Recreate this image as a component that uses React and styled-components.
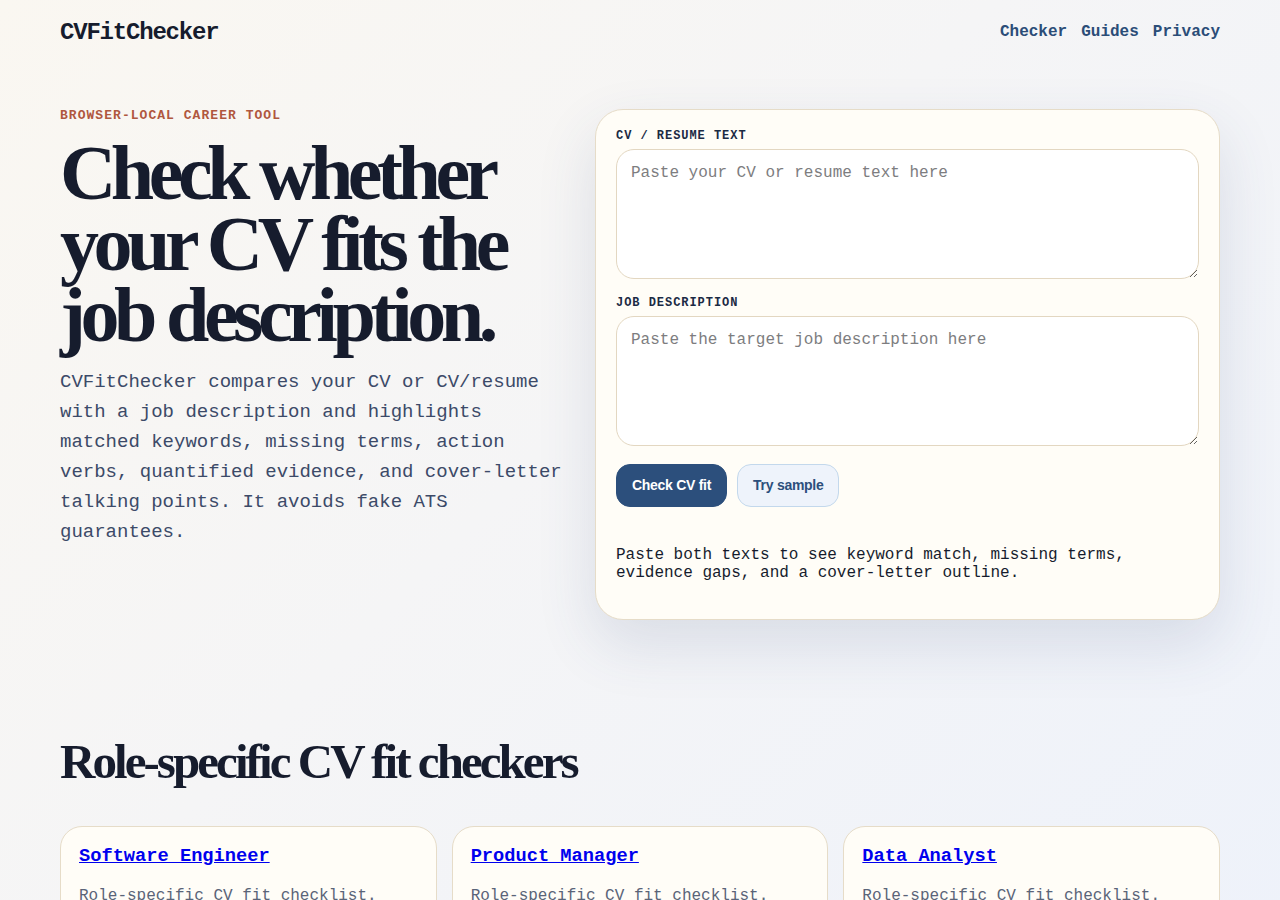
import styled, { createGlobalStyle } from "styled-components";

const GlobalStyle = createGlobalStyle`
  html, body {
    margin: 0;
    padding: 0;
  }
  body {
    min-height: 900px;
    background: linear-gradient(135deg, #faf7f1 0%, #f5f5f6 45%, #eef2fa 100%);
    color: #161c2d;
    font-family: "Liberation Mono", monospace;
  }
  * {
    box-sizing: border-box;
  }
`;

const Page = styled.div`
  width: 1160px;
  margin: 0 auto;
`;

const Header = styled.header`
  display: flex;
  align-items: center;
  justify-content: space-between;
  height: 62px;
  padding-top: 2px;
`;

const Logo = styled.div`
  font-family: "Liberation Mono", monospace;
  font-weight: 700;
  font-size: 24px;
  letter-spacing: -0.05em;
  color: #161c2d;
`;

const Nav = styled.nav`
  display: flex;
  gap: 14px;
`;

const NavLink = styled.a`
  font-family: "Liberation Mono", monospace;
  font-weight: 700;
  font-size: 16px;
  color: #2b4d78;
  text-decoration: none;
`;

const Hero = styled.section`
  display: grid;
  grid-template-columns: 505px 1fr;
  gap: 30px;
  align-items: start;
  padding-top: 46px;
`;

const Intro = styled.div`
  display: flex;
  flex-direction: column;
`;

const Eyebrow = styled.p`
  margin: 0;
  font-weight: 700;
  font-size: 13px;
  letter-spacing: 0.08em;
  color: #b0573e;
  line-height: 16px;
`;

const Title = styled.h1`
  margin: 13px 0 0;
  font-family: "Liberation Serif", serif;
  font-weight: 700;
  font-size: 78px;
  line-height: 71px;
  letter-spacing: -0.07em;
  color: #161c2d;
`;

const Lead = styled.p`
  margin: 17px 0 0;
  font-size: 19px;
  line-height: 30px;
  color: #3c4a68;
`;

const FormCard = styled.div`
  margin-top: 1px;
  background: #fffdf7;
  border: 1px solid #e6dcc8;
  border-radius: 28px;
  padding: 18px 20px 37px 20px;
  box-shadow: 0 24px 60px rgba(60, 80, 130, 0.14);
`;

const Label = styled.label`
  display: block;
  font-weight: 700;
  font-size: 12px;
  letter-spacing: 0.08em;
  line-height: 16px;
  color: #1b2a44;
  margin: ${(p) => (p.$first ? "0" : "16px")} 0 5px;
`;

const TextArea = styled.textarea`
  display: block;
  width: 100%;
  height: 130px;
  padding: 14px;
  border: 1px solid #e3d7c1;
  border-radius: 18px;
  background: #ffffff;
  font-family: "Liberation Mono", monospace;
  font-size: 16px;
  color: #161c2d;
  resize: vertical;
  outline: none;

  &::placeholder {
    color: #7d7d80;
  }
`;

const Actions = styled.div`
  display: flex;
  gap: 10px;
  margin-top: 18px;
`;

const Button = styled.button`
  font-family: "Liberation Sans", Arial, sans-serif;
  font-weight: 700;
  font-size: 14px;
  line-height: 17px;
  letter-spacing: -0.02em;
  padding: 12px 15px;
  border-radius: 14px;
  cursor: pointer;
  border: 1px solid ${(p) => (p.$primary ? "#2c4f7c" : "#c3d8ec")};
  background: ${(p) => (p.$primary ? "#2c4f7c" : "#eef3fb")};
  color: ${(p) => (p.$primary ? "#ffffff" : "#2c4f7c")};
`;

const Hint = styled.p`
  margin: 39px 0 0;
  font-size: 16px;
  line-height: 18px;
  color: #161c2d;
`;

const Roles = styled.section`
  padding-top: 112px;
`;

const SectionTitle = styled.h2`
  margin: 0;
  font-family: "Liberation Serif", serif;
  font-weight: 700;
  font-size: 49px;
  line-height: 60px;
  letter-spacing: -0.06em;
  color: #161c2d;
`;

const CardGrid = styled.div`
  display: grid;
  grid-template-columns: repeat(3, 1fr);
  gap: 15px;
  margin-top: 34px;
`;

const RoleCard = styled.div`
  background: #fffdf7;
  border: 1px solid #e6dcc8;
  border-radius: 22px;
  padding: 17px 18px 24px;
`;

const RoleLink = styled.a`
  font-weight: 700;
  font-size: 18.7px;
  line-height: 24px;
  color: #0000ee;
  text-decoration: underline;
`;

const RoleText = styled.p`
  margin: 16px 0 0;
  font-size: 16px;
  line-height: 24px;
  color: #5a6478;
`;

const roles = ["Software Engineer", "Product Manager", "Data Analyst"];

export default function App() {
  return (
    <>
      <GlobalStyle />
      <Page>
        <Header>
          <Logo>CVFitChecker</Logo>
          <Nav>
            <NavLink href="#checker">Checker</NavLink>
            <NavLink href="#guides">Guides</NavLink>
            <NavLink href="#privacy">Privacy</NavLink>
          </Nav>
        </Header>

        <Hero>
          <Intro>
            <Eyebrow>BROWSER-LOCAL CAREER TOOL</Eyebrow>
            <Title>Check whether your CV fits the job description.</Title>
            <Lead>
              CVFitChecker compares your CV or CV/resume with a job description and
              highlights matched keywords, missing terms, action verbs, quantified
              evidence, and cover-letter talking points. It avoids fake ATS
              guarantees.
            </Lead>
          </Intro>

          <FormCard>
            <Label $first htmlFor="cv">CV / RESUME TEXT</Label>
            <TextArea id="cv" placeholder="Paste your CV or resume text here" />
            <Label htmlFor="jd">JOB DESCRIPTION</Label>
            <TextArea id="jd" placeholder="Paste the target job description here" />
            <Actions>
              <Button $primary>Check CV fit</Button>
              <Button>Try sample</Button>
            </Actions>
            <Hint>
              Paste both texts to see keyword match, missing terms,
              <br />
              evidence gaps, and a cover-letter outline.
            </Hint>
          </FormCard>
        </Hero>

        <Roles>
          <SectionTitle>Role-specific CV fit checkers</SectionTitle>
          <CardGrid>
            {roles.map((role) => (
              <RoleCard key={role}>
                <RoleLink href="#">{role}</RoleLink>
                <RoleText>Role-specific CV fit checklist.</RoleText>
              </RoleCard>
            ))}
          </CardGrid>
        </Roles>
      </Page>
    </>
  );
}
